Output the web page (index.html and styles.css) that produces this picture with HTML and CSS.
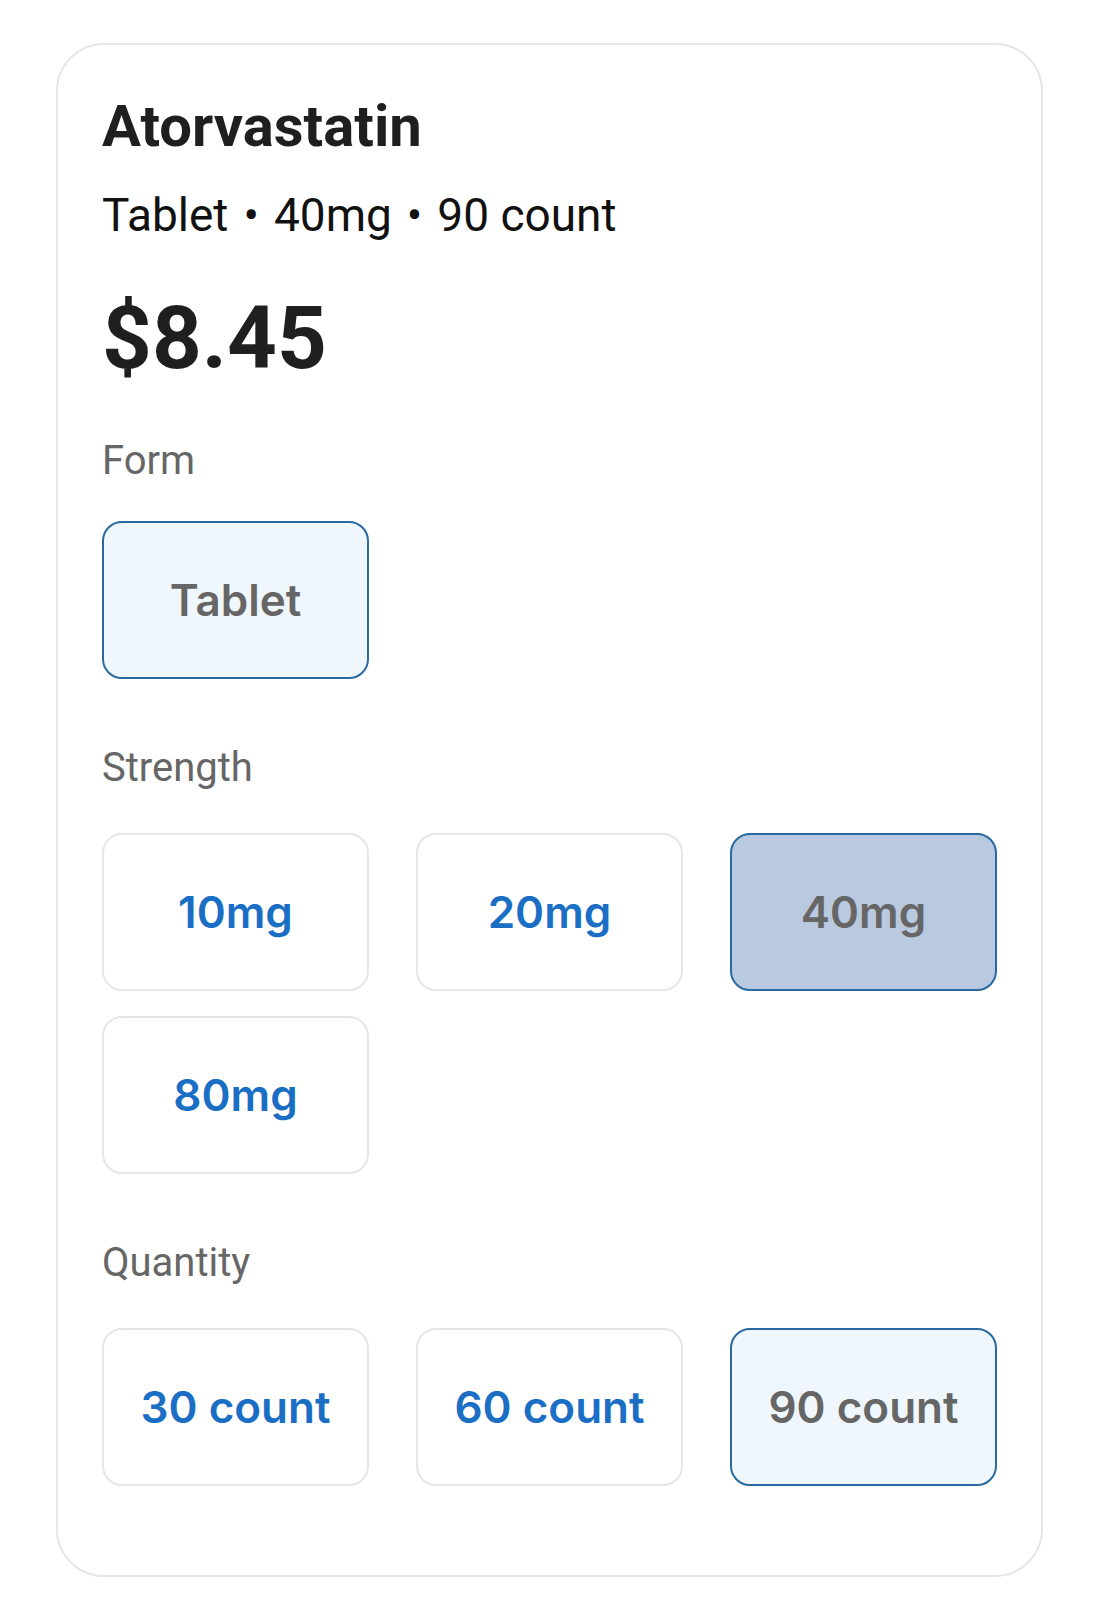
FILE: index.html
```html
<!DOCTYPE html>
<html lang="en">
  <head>
    <meta charset="utf-8" />
    <meta name="viewport" content="width=device-width, initial-scale=1.0" />
    <title>Atorvastatin</title>
    <link rel="stylesheet" href="styles.css">
  </head>
  <body>
    <main class="page">
      <section class="drug-card">
        <h1 class="drug-name">Atorvastatin</h1>
        <p class="drug-summary">Tablet<span class="dot">•</span>40mg<span class="dot">•</span>90 count</p>
        <p class="drug-price">$8.45</p>

        <div class="option-group">
          <h2 class="option-label">Form</h2>
          <div class="option-grid">
            <button type="button" class="option selected">Tablet</button>
          </div>
        </div>

        <div class="option-group">
          <h2 class="option-label">Strength</h2>
          <div class="option-grid">
            <button type="button" class="option">10mg</button>
            <button type="button" class="option">20mg</button>
            <button type="button" class="option active">40mg</button>
            <button type="button" class="option">80mg</button>
          </div>
        </div>

        <div class="option-group">
          <h2 class="option-label">Quantity</h2>
          <div class="option-grid">
            <button type="button" class="option">30 count</button>
            <button type="button" class="option">60 count</button>
            <button type="button" class="option selected">90 count</button>
          </div>
        </div>
      </section>
    </main>
  </body>
</html>
```

FILE: styles.css
```css
:root {
  --ink: #1f1f1f;
  --muted: #666666;
  --blue: #1a6fc4;
  --edge: #2a6aa0;
  --line: #e4e6e8;
  --pale: #eff7fd;
  --steel: #b9c9e0;
}

body {
  margin: 0;
  background-color: #ffffff;
  font-family: Roboto, "Liberation Sans", Arial, sans-serif;
  color: var(--ink);
}

.page {
  padding: 43px 57px 27px 56px;
}

.drug-card {
  border: 2px solid var(--line);
  border-radius: 48px;
  padding: 46px 44px 89px;
}

.drug-name {
  margin: 0;
  font-size: 58px;
  line-height: 70px;
  font-weight: 700;
  color: var(--ink);
}

.drug-summary {
  margin: 25px 0 0;
  font-size: 46px;
  line-height: 58px;
  font-weight: 400;
  color: #111111;
}

.drug-summary .dot {
  margin: 0 15px;
}

.drug-price {
  margin: 44px 0 0;
  font-size: 87px;
  line-height: 100px;
  font-weight: 700;
  color: var(--ink);
}

.option-group {
  margin-top: 65px;
}

.drug-price + .option-group {
  margin-top: 49px;
}

.option-label {
  margin: 0 0 36px;
  font-size: 40px;
  line-height: 48px;
  font-weight: 400;
  color: var(--muted);
}

.option-group + .option-group .option-label {
  margin-bottom: 41px;
}

.option-grid {
  display: grid;
  grid-template-columns: repeat(3, 1fr);
  column-gap: 47px;
  row-gap: 25px;
}

.option {
  box-sizing: border-box;
  height: 158px;
  display: flex;
  align-items: center;
  justify-content: center;
  background-color: #ffffff;
  border: 2px solid var(--line);
  border-radius: 20px;
  font-family: Inter, "Noto Sans", sans-serif;
  font-size: 44px;
  font-weight: 600;
  color: var(--blue);
  cursor: pointer;
}

.option.selected {
  background-color: var(--pale);
  border-color: var(--edge);
  color: var(--muted);
}

.option.active {
  background-color: var(--steel);
  border-color: var(--edge);
  color: var(--muted);
}
```
